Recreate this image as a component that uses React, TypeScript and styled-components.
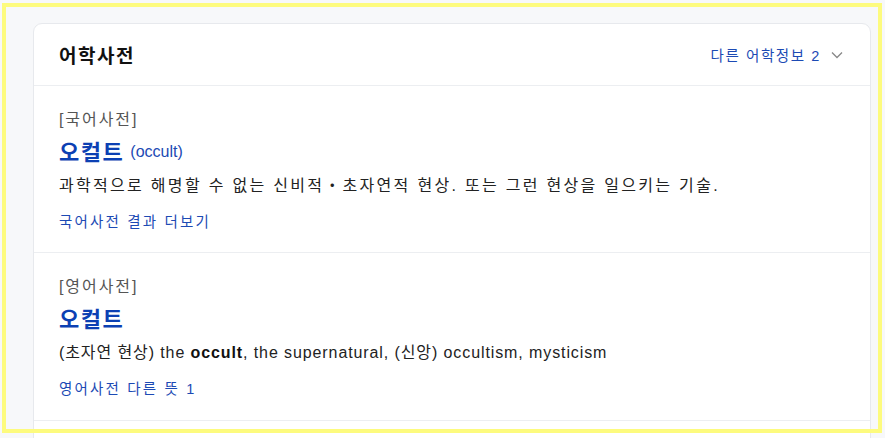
import React from 'react';
import styled, { createGlobalStyle } from 'styled-components';

const GlobalStyle = createGlobalStyle`
 html, body {
  margin: 0;
  padding: 0;
  background: #f7f8fa;
 }
 body {
  font-family: 'Liberation Sans', 'Noto Sans CJK KR', sans-serif;
  color: #222;
 }
`;

const Page = styled.div`
 position: relative;
 width: 885px;
 height: 438px;
 overflow: hidden;
 padding: 23px 14px 0 33px;
 box-sizing: border-box;
`;

// yellow highlight frame drawn over the capture
const Highlight = styled.div`
 position: absolute;
 left: 2px;
 top: 3px;
 width: 880px;
 height: 430px;
 box-sizing: border-box;
 border: 4px solid #fdfb7e;
 pointer-events: none;
`;

const Card = styled.section`
 background: #fff;
 border: 1px solid #e7e9ed;
 border-radius: 9px;
 height: 480px;
`;

const Header = styled.div`
 display: flex;
 justify-content: space-between;
 align-items: center;
 height: 61px;
 padding: 0 27px 0 25px;
 border-bottom: 1px solid #eceef1;
`;

const Title = styled.h2`
 margin: 0;
 font-size: 19px;
 font-weight: 700;
 letter-spacing: 0.08em;
 color: #111;
`;

const MoreInfo = styled.button`
 display: flex;
 align-items: center;
 gap: 10px;
 border: 0;
 background: none;
 padding: 0;
 font-family: inherit;
 font-size: 14.5px;
 letter-spacing: 0.11em;
 color: #1c4ab4;
 cursor: pointer;
`;

const Section = styled.div<{ $top: number; $bottom: number }>`
 padding: ${(p) => p.$top}px 25px ${(p) => p.$bottom}px;
 border-bottom: 1px solid #eceef1;
`;

const DictLabel = styled.div`
 font-size: 16px;
 line-height: 22px;
 letter-spacing: 0.12em;
 color: #555;
`;

const Word = styled.div`
 margin-top: 4px;
 height: 30px;
 display: flex;
 align-items: center;
 gap: 6px;
 & b {
  font-size: 22px;
  font-weight: 700;
  letter-spacing: 0.07em;
  color: #0c40b3;
 }
 & span {
  font-size: 16px;
  padding-top: 3px;
  color: #1c4ab4;
 }
`;

const Meaning = styled.p<{ $spacing: number }>`
 margin: 9px 0 0;
 font-size: 16px;
 line-height: 24px;
 letter-spacing: ${(p) => p.$spacing}px;
 color: #222;
 & b {
  font-weight: 700;
  color: #111;
 }
`;

const MoreLink = styled.a`
 display: block;
 margin-top: 14px;
 font-size: 14.5px;
 line-height: 20px;
 letter-spacing: 0.15em;
 color: #1c4ab4;
 text-decoration: none;
`;

const Chevron = () => (
 <svg width='12' height='8' viewBox='0 0 12 8' fill='none'>
  <path d='M1 1.5l5 5 5-5' stroke='#888' strokeWidth='1.3' />
 </svg>
);

export default function App() {
 return (
  <>
   <GlobalStyle />
   <Page>
    <Card>
     <Header>
      <Title>어학사전</Title>
      <MoreInfo>
       다른 어학정보 2
       <Chevron />
      </MoreInfo>
     </Header>
     <Section $top={23} $bottom={20}>
      <DictLabel>[국어사전]</DictLabel>
      <Word>
       <b>오컬트</b>
       <span>(occult)</span>
      </Word>
      <Meaning $spacing={2.3}>과학적으로 해명할 수 없는 신비적・초자연적 현상. 또는 그런 현상을 일으키는 기술.</Meaning>
      <MoreLink href='#'>국어사전 결과 더보기</MoreLink>
     </Section>
     <Section $top={23} $bottom={21}>
      <DictLabel>[영어사전]</DictLabel>
      <Word>
       <b>오컬트</b>
      </Word>
      <Meaning $spacing={0.9}>
       (초자연 현상) the <b>occult</b>, the supernatural, (신앙) occultism, mysticism
      </Meaning>
      <MoreLink href='#'>영어사전 다른 뜻 1</MoreLink>
     </Section>
    </Card>
    <Highlight />
   </Page>
  </>
 );
}
